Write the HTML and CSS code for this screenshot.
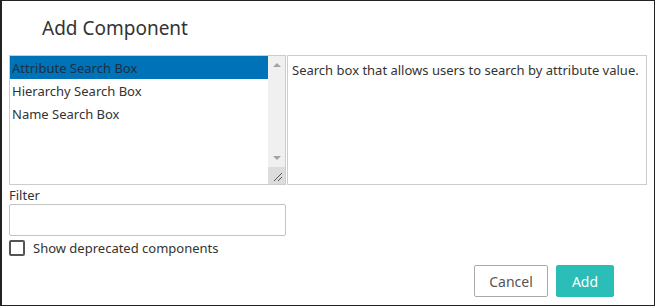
FILE: index.html
```html
<!DOCTYPE html>
<html lang="en">
<head>
    <meta charset="UTF-8">
    <meta name="viewport" content="width=device-width, initial-scale=1.0">
    <title>Add Component</title>
    <link rel="stylesheet" href="styles.css">
</head>
<body>
    <div class="dialog">
        <div class="dialog-header">
            <h2>Add Component</h2>
        </div>
        <div class="picker">
            <div class="component-list">
                <ul>
                    <li class="selected">Attribute Search Box</li>
                    <li>Hierarchy Search Box</li>
                    <li>Name Search Box</li>
                </ul>
                <div class="scrollbar">
                    <span class="arrow up"></span>
                    <span class="track"></span>
                    <span class="arrow down"></span>
                    <span class="grip">
                        <svg width="17" height="17" viewBox="0 0 17 17">
                            <path d="M6 14 L14 6 M10 14 L14 10" stroke="#555" stroke-width="1"/>
                        </svg>
                    </span>
                </div>
            </div>
            <div class="description">Search box that allows users to search by attribute value.</div>
        </div>
        <label class="filter-label">Filter</label>
        <input class="filter-input" type="text">
        <label class="deprecated">
            <span class="checkbox"></span>
            Show deprecated components
        </label>
        <div class="dialog-footer">
            <button class="btn btn-cancel">Cancel</button>
            <button class="btn btn-add">Add</button>
        </div>
    </div>
</body>
</html>
```

FILE: styles.css
```css
body {
    margin: 0;
    padding: 0;
    background: #ffffff;
    font-family: 'Noto Sans', 'Open Sans', sans-serif;
    color: #333333;
}

.dialog {
    width: 655px;
    height: 306px;
    box-sizing: border-box;
    border: 1px solid #222222;
    border-left-width: 2px;
    padding: 0 7px 0 7px;
    display: flex;
    flex-direction: column;
}

.dialog-header {
    height: 54px;
    display: flex;
    align-items: center;
    padding-left: 33px;
}

.dialog-header h2 {
    margin: 0;
    font-size: 19px;
    font-weight: normal;
    color: #333333;
}

.picker {
    display: flex;
    height: 130px;
}

.component-list {
    width: 277px;
    box-sizing: border-box;
    border: 1px solid #cccccc;
    display: flex;
}

.component-list ul {
    list-style: none;
    margin: 0;
    padding: 0;
    flex: 1;
}

.component-list li {
    height: 23px;
    line-height: 24px;
    padding-left: 2px;
    font-size: 13px;
    color: #333333;
}

.component-list li.selected {
    background: #0072b8;
    color: #1f2f3f;
}

.scrollbar {
    width: 17px;
    background: #f0f0f0;
    display: flex;
    flex-direction: column;
    align-items: center;
}

.arrow {
    width: 0;
    height: 0;
    border-left: 4px solid transparent;
    border-right: 4px solid transparent;
}

.arrow.up {
    margin-top: 7px;
    border-bottom: 4px solid #a3a3a3;
}

.arrow.down {
    margin-bottom: 7px;
    border-top: 4px solid #a3a3a3;
}

.track {
    flex: 1;
}

.grip {
    width: 17px;
    height: 17px;
    background: #dcdcdc;
}

.grip svg {
    display: block;
}

.description {
    flex: 1;
    margin-left: 1px;
    border: 1px solid #cccccc;
    padding: 5px 4px;
    font-size: 13px;
    line-height: 18px;
}

.filter-label {
    margin-top: 1px;
    font-size: 13px;
    line-height: 18px;
}

.filter-input {
    width: 277px;
    height: 32px;
    box-sizing: border-box;
    margin: 0;
    border: 1px solid #c4c4c4;
    border-radius: 2px;
}

.deprecated {
    display: flex;
    align-items: center;
    height: 22px;
    margin-top: 1px;
    font-size: 13px;
    gap: 8px;
}

.checkbox {
    width: 16px;
    height: 16px;
    box-sizing: border-box;
    border: 2px solid #555555;
    border-radius: 2px;
}

.dialog-footer {
    display: flex;
    justify-content: flex-end;
    gap: 8px;
    margin-top: 6px;
    padding-right: 33px;
}

.btn {
    height: 32px;
    border-radius: 2px;
    font-family: 'Noto Sans', 'Open Sans', sans-serif;
    font-size: 14px;
    cursor: pointer;
}

.btn-cancel {
    width: 74px;
    background: #ffffff;
    border: 1px solid #aaaaaa;
    color: #555555;
}

.btn-add {
    width: 58px;
    background: #2bbdb7;
    border: 1px solid #2bbdb7;
    color: #ffffff;
}
```
